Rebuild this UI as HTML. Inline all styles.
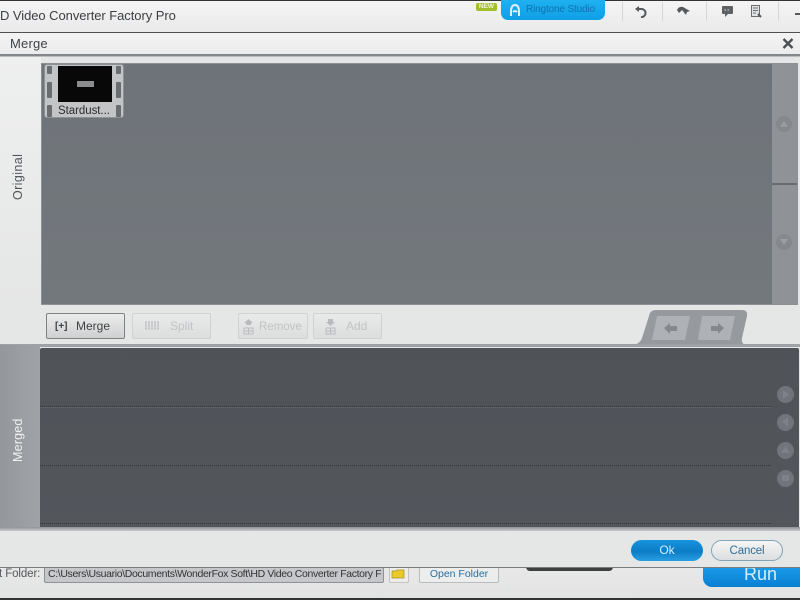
<!DOCTYPE html>
<html>
<head>
<meta charset="utf-8">
<style>
html,body{margin:0;padding:0;width:800px;height:600px;overflow:hidden;background:#e6e7e7}
*{box-sizing:border-box}
body{font-family:"Liberation Sans",sans-serif}
#w{position:absolute;left:0;top:0;width:800px;height:600px;overflow:hidden;filter:blur(.35px)}
.a{position:absolute}
.t{position:absolute;white-space:nowrap}
.btn{position:absolute;top:313px;height:26px;border:1px solid #cfd1d2;border-radius:2px;background:linear-gradient(#e9eaea,#dcdddd);color:#c0c3c5;font-size:12px;line-height:25px}
.circ{position:absolute;left:777px;width:17px;height:17px;border-radius:50%;background:#71747a}
</style>
</head>
<body>
<div id="w">
<!-- top app bar -->
<div class="a" style="left:0;top:0;width:800px;height:32px;background:linear-gradient(#f5f5f5,#e9e9e9)"></div>
<div class="a" style="left:0;top:0;width:800px;height:1px;background:#333"></div>
<div class="t" style="left:0;top:8px;font-size:13px;letter-spacing:-.06px;color:#3c4044">D Video Converter Factory Pro</div>
<div class="t" style="left:476px;top:3px;width:21px;height:8px;background:#a4bf2c;border-radius:2px;color:#f2f6d8;font-size:6.5px;line-height:8px;text-align:center;font-weight:bold">NEW</div>
<div class="a" style="left:501px;top:0;width:104px;height:20px;background:linear-gradient(#1eb0f0,#0f9fe6);border-radius:0 0 7px 7px"></div>
<svg class="a" style="left:508px;top:3px" width="14" height="14" viewBox="0 0 14 14"><path d="M3 13 L3 9 Q3 2 7 2 Q11 2 11 9 L11 13 M5 9 Q7 7 9 9" fill="none" stroke="#d8f2fd" stroke-width="2"/></svg>
<div class="t" style="left:526px;top:4px;font-size:10px;letter-spacing:-.15px;color:#0f73ad">Ringtone Studio</div>
<div class="a" style="left:622px;top:2px;width:1px;height:19px;background:#d6d6d6"></div>
<div class="a" style="left:662px;top:2px;width:1px;height:19px;background:#d6d6d6"></div>
<div class="a" style="left:706px;top:2px;width:1px;height:19px;background:#d6d6d6"></div>
<div class="a" style="left:778px;top:2px;width:1px;height:19px;background:#d6d6d6"></div>
<svg class="a" style="left:634px;top:4px" width="15" height="14" viewBox="0 0 15 14"><path d="M4 5 H8 A4 4 0 1 1 7 13" fill="none" stroke="#55595c" stroke-width="2"/><path d="M1 5 L5 2 V8 Z" fill="#55595c"/></svg>
<svg class="a" style="left:676px;top:5px" width="15" height="12" viewBox="0 0 15 12"><path d="M1 5 Q3 1 7 2 L14 6 L11 7 L10 10 L6 5 L3 8 Z" fill="#55595c"/></svg>
<svg class="a" style="left:721px;top:5px" width="13" height="13" viewBox="0 0 13 13"><path d="M2 1 H11 Q12 1 12 2 V8 Q12 9 11 9 H7 L4 12 V9 H2 Q1 9 1 8 V2 Q1 1 2 1 Z" fill="#5e6265"/><path d="M3.500 5 H9.500" stroke="#ddd" stroke-dasharray="1.5 1.500"/></svg>
<svg class="a" style="left:750px;top:4px" width="12" height="14" viewBox="0 0 12 14"><path d="M1.500 1.500 H9.500 V12.500 H1.500 Z" fill="#e3e3e3" stroke="#6a6e71"/><path d="M3 4 H8 M3 6.500 H8 M3 9 H6" stroke="#6a6e71"/><path d="M8 10 L11 13" stroke="#55595c" stroke-width="2"/></svg>
<div class="a" style="left:795px;top:13px;width:5px;height:2px;background:#55595c"></div>

<!-- bottom app bar -->
<div class="a" style="left:0;top:567px;width:800px;height:33px;background:linear-gradient(#e8e8e8,#e2e3e3)"></div>
<div class="a" style="left:0;top:598px;width:800px;height:2px;background:#333"></div>
<div class="t" style="left:-1px;top:568px;font-size:11.500px;letter-spacing:-.1px;color:#55595c">t Folder:</div>
<div class="a" style="left:44px;top:567px;width:340px;height:16px;background:#c5c7ca;border:1px solid #8f9295;border-top:0;border-radius:0 0 2px 2px"></div>
<div class="t" style="left:48px;top:568px;font-size:10.5px;color:#333;letter-spacing:-.36px;width:333px;overflow:hidden">C:\Users\Usuario\Documents\WonderFox Soft\HD Video Converter Factory F</div>
<div class="a" style="left:389px;top:567px;width:20px;height:16px;background:#ececec;border:1px solid #c4c4c4;border-top:0;border-radius:0 0 2px 2px"></div>
<svg class="a" style="left:391px;top:569px" width="15" height="10" viewBox="0 0 15 10"><path d="M1 2 H5 L6 1 H13 V9 H1 Z" fill="#e9c92b" stroke="#a68f1b" stroke-width=".7"/></svg>
<div class="a" style="left:419px;top:567px;width:80px;height:16px;background:#eceded;border:1px solid #b9bbbc;border-top:0;border-radius:0 0 2px 2px"></div>
<div class="t" style="left:419px;top:568px;width:80px;text-align:center;font-size:10.5px;color:#2a6f9d">Open Folder</div>
<div class="a" style="left:526px;top:567px;width:87px;height:4px;background:#3d3f41;border-radius:0 0 6px 6px"></div>
<div class="a" style="left:703px;top:567px;width:97px;height:20px;background:linear-gradient(#1a9be8,#0a7fd4);border-radius:0 0 0 9px"></div>
<div class="t" style="left:744px;top:564px;font-size:18px;color:#d6eefb">Run</div>

<!-- dialog -->
<div class="a" style="left:0;top:32px;width:800px;height:536px;background:#e5e6e6;border-top:1px solid #4e5052;border-bottom:1px solid #7a7c7e"></div>
<div class="a" style="left:0;top:33px;width:800px;height:21px;background:linear-gradient(#f3f3f3,#ececec)"></div>
<div class="a" style="left:0;top:54px;width:800px;height:2px;background:#85888a"></div>
<div class="a" style="left:0;top:56px;width:800px;height:1px;background:#bcbdbe"></div>
<div class="t" style="left:10px;top:36px;font-size:13px;letter-spacing:.2px;color:#3f4347">Merge</div>
<svg class="a" style="left:782px;top:38px" width="12" height="11" viewBox="0 0 12 11"><path d="M1.500 1 L10.500 10 M10.500 1 L1.500 10" stroke="#4b4f52" stroke-width="2.400"/></svg>

<!-- original -->
<div class="a" style="left:0;top:57px;width:41px;height:248px;background:linear-gradient(#eeefef,#e5e6e6)"></div>
<div class="t" style="left:-2px;top:173px;width:40px;text-align:center;font-size:12.5px;letter-spacing:.4px;color:#54585b;transform:rotate(-90deg)">Original</div>
<div class="a" style="left:41px;top:63px;width:757px;height:242px;background:linear-gradient(#6e7379,#73787d);border:1px solid #8d9094"></div>
<div class="a" style="left:772px;top:64px;width:25px;height:120px;background:#8f9297"></div>
<div class="a" style="left:772px;top:183px;width:25px;height:2px;background:#686c71"></div>
<div class="a" style="left:772px;top:185px;width:25px;height:119px;background:#8f9297"></div>
<div class="a" style="left:776px;top:116px;width:16px;height:16px;border-radius:50%;background:#85888d"></div>
<div class="a" style="left:776px;top:234px;width:16px;height:16px;border-radius:50%;background:#85888d"></div>
<svg class="a" style="left:780px;top:120px" width="8" height="8" viewBox="0 0 8 8"><path d="M4 1 L8 7 H0 Z" fill="#9a9da1"/></svg>
<svg class="a" style="left:780px;top:238px" width="8" height="8" viewBox="0 0 8 8"><path d="M0 1 H8 L4 7 Z" fill="#9a9da1"/></svg>

<!-- thumb -->
<div class="a" style="left:44px;top:64px;width:80px;height:54px;background:#c2c4c6;border:1px solid #8d9094;border-radius:3px"></div>
<div class="a" style="left:58px;top:66px;width:54px;height:36px;background:#080808"></div>
<div class="a" style="left:77px;top:81px;width:17px;height:6px;background:#8a8c8e"></div>
<div class="a" style="left:47px;top:66px;width:5px;height:8px;background:#6a6d70;border-radius:1px"></div>
<div class="a" style="left:47px;top:82px;width:5px;height:16px;background:#6a6d70;border-radius:1px"></div>
<div class="a" style="left:47px;top:105px;width:5px;height:12px;background:#6a6d70;border-radius:1px"></div>
<div class="a" style="left:116px;top:66px;width:5px;height:8px;background:#6a6d70;border-radius:1px"></div>
<div class="a" style="left:116px;top:82px;width:5px;height:16px;background:#6a6d70;border-radius:1px"></div>
<div class="a" style="left:116px;top:105px;width:5px;height:12px;background:#6a6d70;border-radius:1px"></div>
<div class="t" style="left:58px;top:105px;font-size:11.5px;letter-spacing:-.05px;color:#2b2d2f">Stardust...</div>

<!-- toolbar -->
<div class="btn" style="left:46px;width:79px;border-color:#7f8285;background:linear-gradient(#ececec,#cfd0d1);color:#3f4346"><span class="t" style="left:29px;top:0;font-size:12px">Merge</span><span class="t" style="left:8px;top:0;font-size:10px;font-weight:bold;color:#3f4346">[+]</span></div>
<div class="btn" style="left:132px;width:79px"><span class="t" style="left:37px;top:0">Split</span></div>
<svg class="a" style="left:145px;top:320px" width="14" height="11" viewBox="0 0 14 11"><path d="M1 1 V10 M4 1 V10 M7 1 V10 M10 1 V10 M13 1 V10 M0 3 H14 M0 6 H14 M0 9 H14" stroke="#b9bcbf" stroke-dasharray="2 1"/></svg>
<div class="btn" style="left:238px;width:70px"><span class="t" style="left:20px;top:1px;font-size:11.500px">Remove</span></div>
<svg class="a" style="left:243px;top:318px" width="11" height="17" viewBox="0 0 11 17"><path d="M5.500 1 L10 5 H8 V7 H3 V5 H1 Z" fill="#b9bcbf"/><path d="M1 10 H10 V16 H1 Z M1 13 H10 M5.500 10 V16" fill="none" stroke="#b9bcbf"/></svg>
<div class="btn" style="left:313px;width:69px"><span class="t" style="left:32px;top:0">Add</span></div>
<svg class="a" style="left:325px;top:318px" width="11" height="17" viewBox="0 0 11 17"><path d="M3 1 H8 V4 H10 L5.500 8 L1 4 H3 Z" fill="#b9bcbf"/><path d="M1 10 H10 V16 H1 Z M1 13 H10 M5.500 10 V16" fill="none" stroke="#b9bcbf"/></svg>

<!-- arrow tab -->
<svg class="a" style="left:630px;top:308px" width="125" height="42" viewBox="0 0 125 42"><path d="M3 37 Q10 36 12 30 L19 8 Q20 2 26 2 L112 2 Q118 2 117 8 L112 30 Q111 35 115 37 Z" fill="#969a9e"/><path d="M27 8 H60 L55 32 H22 Z M72 8 H105 L100 32 H68 Z" fill="#aeb1b5"/><path d="M34 20 L40 15 V18 H47 V23 H40 V26 Z" fill="#85888d"/><path d="M94 20 L88 15 V18 H81 V23 H88 V26 Z" fill="#85888d"/></svg>

<!-- merged -->
<div class="a" style="left:0;top:344px;width:800px;height:3px;background:#9fa2a6"></div>
<div class="a" style="left:0;top:345px;width:40px;height:182px;background:linear-gradient(90deg,#94979b,#a0a3a7)"></div>
<div class="t" style="left:-2px;top:435px;width:40px;text-align:center;font-size:12.500px;letter-spacing:.2px;color:#f0f1f1;transform:rotate(-90deg)">Merged</div>
<div class="a" style="left:40px;top:348px;width:759px;height:179px;background:linear-gradient(#4f5358,#53575c);border-radius:2px 2px 0 0"></div>
<div class="a" style="left:40px;top:406px;width:731px;height:0;border-top:1px dotted #33363a"></div>
<div class="a" style="left:40px;top:407px;width:731px;height:1px;background:#5e6267"></div>
<div class="a" style="left:40px;top:465px;width:731px;height:0;border-top:1px dotted #33363a"></div>
<div class="a" style="left:40px;top:523px;width:731px;height:0;border-top:1px dotted #33363a"></div>
<div class="circ" style="top:386px"></div>
<div class="circ" style="top:414px"></div>
<div class="circ" style="top:442px"></div>
<div class="circ" style="top:470px"></div>
<svg class="a" style="left:777px;top:386px" width="17" height="101" viewBox="0 0 17 101"><path d="M6 4 L12 8.500 L6 13 Z M11 31 L5 35.500 L11 41 Z M8.500 60 L13 67 H4 Z" fill="#7e8186"/><rect x="5" y="89" width="7" height="6" fill="#7e8186"/></svg>
<div class="a" style="left:0;top:527px;width:800px;height:4px;background:linear-gradient(#8f9296,#c9cacb)"></div>

<!-- footer buttons -->
<div class="a" style="left:631px;top:540px;width:72px;height:21px;border-radius:11px;background:linear-gradient(#1694dc,#0c7dc6 55%,#2aa0e4);color:#d8effb;text-align:center;font-size:12px;line-height:21px">Ok</div>
<div class="a" style="left:711px;top:540px;width:72px;height:21px;border-radius:11px;background:linear-gradient(#f5f5f5,#dcdedf);border:1px solid #7fa5bb;color:#2e6f99;text-align:center;font-size:11.500px;letter-spacing:-.15px;line-height:21px">Cancel</div>
</div>
</body>
</html>
